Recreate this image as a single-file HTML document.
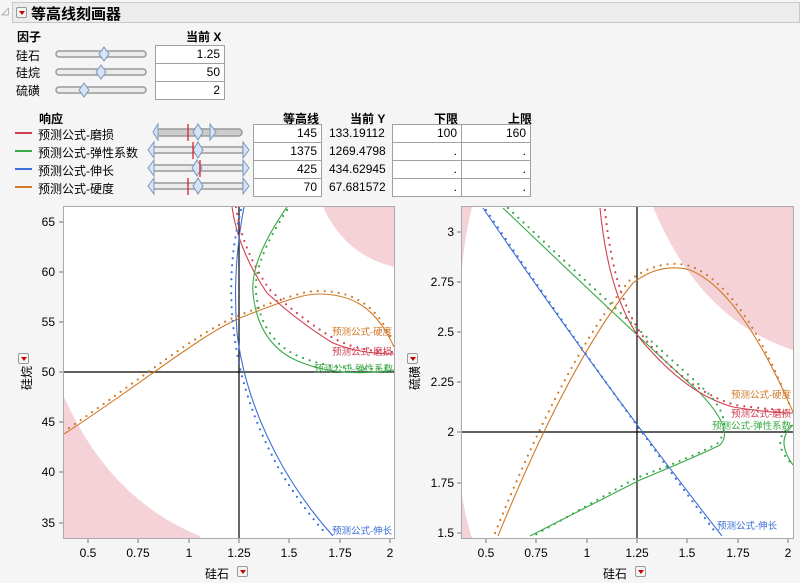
<!DOCTYPE html>
<html><head><meta charset="utf-8"><style>
body{margin:0;width:800px;height:583px;background:#f5f5f5;font-family:"Liberation Sans","Noto Sans CJK SC",sans-serif;font-size:12px;color:#000;position:relative;overflow:hidden}
.a{position:absolute;white-space:nowrap}
.b{font-weight:bold}
.box{position:absolute;background:#fff;border:1px solid #a0a0a0;box-sizing:border-box;text-align:right;padding-right:4px;line-height:17px;height:19px}
.tri{position:absolute;width:11px;height:11px;border:1px solid #999;border-radius:2px;background:#f4f4f4;box-sizing:border-box}
.tri:after{content:"";position:absolute;left:2px;top:3px;border-left:3px solid transparent;border-right:3px solid transparent;border-top:4px solid #c00}
</style></head><body>
<div class="a" style="left:1px;top:6px;font-size:10px;color:#888">◿</div>
<div class="a" style="left:12px;top:2px;width:788px;height:21px;background:#ececec;border:1px solid #c8c8c8;box-sizing:border-box"></div>
<div class="tri" style="left:16px;top:7px"></div>
<div class="a b" style="left:31px;top:3px;font-size:15px">等高线刻画器</div>

<div class="a b" style="left:17px;top:28px">因子</div>
<div class="a b" style="left:186px;top:28px">当前 X</div>
<div class="a" style="left:16px;top:47px">硅石</div>
<div class="a" style="left:16px;top:64px">硅烷</div>
<div class="a" style="left:16px;top:82px">硫磺</div>
<svg class="a" style="left:0;top:0" width="800" height="200">
<g fill="#ececec" stroke="#999" stroke-width="1.5">
<rect x="56" y="51" width="90" height="6" rx="3"/><rect x="56" y="69" width="90" height="6" rx="3"/><rect x="56" y="87" width="90" height="6" rx="3"/>
<rect x="154" y="129" width="88" height="7" rx="3.5" fill="#ccc"/>
<rect x="153" y="147" width="90" height="6" rx="1"/><rect x="153" y="165" width="90" height="6" rx="1"/><rect x="153" y="183" width="90" height="6" rx="1"/>
</g>
<g fill="#d4e3f5" stroke="#7c97b8" stroke-width="1">
<path d="M104 47l5 7-5 7-5-7z"/><path d="M101 65l5 7-5 7-5-7z"/><path d="M84 83l5 7-5 7-5-7z"/>
<path d="M198 124l5 8-5 8-5-8z"/><path d="M198 142l5 8-5 8-5-8z"/><path d="M197 160l5 8-5 8-5-8z"/><path d="M198 178l5 8-5 8-5-8z"/>
<path d="M158 124l-5 8 5 8z"/><path d="M210 124l6 8-6 8z"/>
<path d="M154 142l-6 8 6 8z"/><path d="M243 142l6 8-6 8z"/>
<path d="M154 160l-6 8 6 8z"/><path d="M243 160l6 8-6 8z"/>
<path d="M154 178l-6 8 6 8z"/><path d="M243 178l6 8-6 8z"/>
</g>
<g stroke="#e0202a" stroke-width="1.3"><path d="M188 124v17M193 142v17M200 160v17M188 178v17"/></g>
<g stroke-width="2"><path d="M15 133h17" stroke="#d04050"/><path d="M15 151h17" stroke="#3aa848"/><path d="M15 169h17" stroke="#3d6fd8"/><path d="M15 187h17" stroke="#d07a28"/></g>
</svg>
<div class="box" style="left:155px;top:45px;width:70px">1.25</div>
<div class="box" style="left:155px;top:63px;width:70px">50</div>
<div class="box" style="left:155px;top:81px;width:70px">2</div>

<div class="a b" style="left:39px;top:110px">响应</div>
<div class="a b" style="left:283px;top:110px">等高线</div>
<div class="a b" style="left:350px;top:110px">当前 Y</div>
<div class="a b" style="left:434px;top:110px">下限</div>
<div class="a b" style="left:508px;top:110px">上限</div>
<div class="a" style="left:38px;top:126px">预测公式-磨损</div>
<div class="a" style="left:38px;top:144px">预测公式-弹性系数</div>
<div class="a" style="left:38px;top:162px">预测公式-伸长</div>
<div class="a" style="left:38px;top:180px">预测公式-硬度</div>
<div class="box" style="left:253px;top:124px;width:69px">145</div>
<div class="box" style="left:253px;top:142px;width:69px">1375</div>
<div class="box" style="left:253px;top:160px;width:69px">425</div>
<div class="box" style="left:253px;top:178px;width:69px">70</div>
<div class="a" style="left:329px;top:126px">133.19112</div>
<div class="a" style="left:329px;top:144px">1269.4798</div>
<div class="a" style="left:329px;top:162px">434.62945</div>
<div class="a" style="left:329px;top:180px">67.681572</div>
<div class="box" style="left:392px;top:124px;width:70px">100</div>
<div class="box" style="left:461px;top:124px;width:70px">160</div>
<div class="box" style="left:392px;top:142px;width:70px">.</div>
<div class="box" style="left:461px;top:142px;width:70px">.</div>
<div class="box" style="left:392px;top:160px;width:70px">.</div>
<div class="box" style="left:461px;top:160px;width:70px">.</div>
<div class="box" style="left:392px;top:178px;width:70px">.</div>
<div class="box" style="left:461px;top:178px;width:70px">.</div>

<svg class="a" style="left:0;top:0" width="800" height="583" font-family="Liberation Sans,Noto Sans CJK SC,sans-serif" font-size="12">
<defs><clipPath id="c1"><rect x="64" y="207" width="330" height="331"/></clipPath><clipPath id="c2"><rect x="462" y="207" width="331" height="331"/></clipPath></defs>
<rect x="63.5" y="206.5" width="331" height="332" fill="#fff" stroke="#aaa"/>
<rect x="461.5" y="206.5" width="332" height="332" fill="#fff" stroke="#aaa"/>
<g clip-path="url(#c1)" fill="none">
<path d="M323 207Q345 255 394 267V207z" fill="#f4d2d7"/>
<path d="M64 397Q110 500 200 536V538H64z" fill="#f4d2d7"/>
<path d="M64 372H394M239 207V538" stroke="#000" stroke-width="1.2"/>
<g stroke-width="1.1">
<path d="M64 434C140 385 200 335 240 318C285 300 305 294 318 294C350 294 375 305 394 347" stroke="#d07a28"/>
<path d="M232 207Q238 250 267 293Q300 323 333 343Q360 354 394 354" stroke="#d04050"/>
<path d="M287 207Q250 260 253 293Q258 345 300 362Q340 378 394 370" stroke="#3aa848"/>
<path d="M244 207Q232 270 237 333Q245 400 283 467Q305 505 333 536" stroke="#3d6fd8"/>
</g>
<g stroke-width="2.2" stroke-linecap="round" stroke-dasharray="0 7">
<path d="M69 428C140 380 200 330 240 315C285 297 305 291 318 291C350 291 375 302 392 340" stroke="#d07a28"/>
<path d="M236 207Q242 250 270 290Q300 318 333 338Q360 352 392 352" stroke="#d04050"/>
<path d="M287 210Q253 262 256 293Q262 343 303 358Q340 372 392 368" stroke="#3aa848"/>
<path d="M241 210Q226 270 234 333Q242 400 278 467Q300 505 327 535" stroke="#3d6fd8"/>
</g>
</g>
<g clip-path="url(#c2)" fill="none">
<path d="M653 207Q700 320 793 350V207z" fill="#f4d2d7"/>
<path d="M462 207H472Q464 240 462 270z" fill="#f4d2d7"/>
<path d="M462 495Q466 520 472 538H462z" fill="#f4d2d7"/>
<path d="M462 432H793M637 207V538" stroke="#000" stroke-width="1.2"/>
<g stroke-width="1.1">
<path d="M483 208Q600 380 722 536" stroke="#3d6fd8"/>
<path d="M503 208Q620 320 700 393Q735 430 720 445Q700 455 640 480L530 536" stroke="#3aa848"/>
<path d="M793 425Q775 440 793 465" stroke="#3aa848"/>
<path d="M600 208Q610 310 650 350Q690 395 733 407Q770 413 793 413" stroke="#d04050"/>
<path d="M498 536Q570 360 633 283Q660 262 690 270Q740 290 793 412" stroke="#d07a28"/>
</g>
<g stroke-width="2.2" stroke-linecap="round" stroke-dasharray="0 7">
<path d="M486 210Q598 375 716 533" stroke="#3d6fd8"/>
<path d="M508 208Q625 318 705 390Q735 420 718 443Q698 455 636 478L535 535" stroke="#3aa848"/>
<path d="M791 426Q770 440 790 462" stroke="#3aa848"/>
<path d="M605 210Q615 310 653 348Q692 392 735 405Q770 410 792 410" stroke="#d04050"/>
<path d="M495 533Q566 356 630 280Q660 258 690 266Q742 285 790 406" stroke="#d07a28"/>
</g>
</g>
<g font-size="9.5">
<text x="332" y="335" fill="#d07a28">预测公式-硬度</text>
<text x="332" y="355" fill="#d04050">预测公式-磨损</text>
<text x="314" y="372" fill="#3aa848">预测公式-弹性系数</text>
<text x="332" y="534" fill="#3d6fd8">预测公式-伸长</text>
<text x="731" y="398" fill="#d07a28">预测公式-硬度</text>
<text x="731" y="417" fill="#d04050">预测公式-磨损</text>
<text x="712" y="429" fill="#3aa848">预测公式-弹性系数</text>
<text x="717" y="529" fill="#3d6fd8">预测公式-伸长</text>
</g>
<g stroke="#777"><path d="M59 222h4M59 272h4M59 322h4M59 372h4M59 422h4M59 472h4M59 523h4M88 539v4M138 539v4M189 539v4M239 539v4M289 539v4M340 539v4M390 539v4"/>
<path d="M457 232h4M457 282h4M457 332h4M457 382h4M457 432h4M457 483h4M457 533h4M486 539v4M536 539v4M587 539v4M637 539v4M687 539v4M738 539v4M788 539v4"/></g>
<g text-anchor="end"><text x="55" y="226">65</text><text x="55" y="276">60</text><text x="55" y="326">55</text><text x="55" y="376">50</text><text x="55" y="426">45</text><text x="55" y="476">40</text><text x="55" y="527">35</text>
<text x="454" y="236">3</text><text x="454" y="286">2.75</text><text x="454" y="336">2.5</text><text x="454" y="386">2.25</text><text x="454" y="436">2</text><text x="454" y="487">1.75</text><text x="454" y="537">1.5</text></g>
<g text-anchor="middle"><text x="88" y="557">0.5</text><text x="138" y="557">0.75</text><text x="189" y="557">1</text><text x="239" y="557">1.25</text><text x="289" y="557">1.5</text><text x="340" y="557">1.75</text><text x="390" y="557">2</text>
<text x="486" y="557">0.5</text><text x="536" y="557">0.75</text><text x="587" y="557">1</text><text x="637" y="557">1.25</text><text x="687" y="557">1.5</text><text x="738" y="557">1.75</text><text x="788" y="557">2</text></g>
<text x="205" y="578">硅石</text><text x="603" y="578">硅石</text>
<text transform="translate(31,390) rotate(-90)">硅烷</text>
<text transform="translate(419,390) rotate(-90)">硫磺</text>
</svg>
<div class="tri" style="left:237px;top:566px"></div>
<div class="tri" style="left:635px;top:566px"></div>
<div class="tri" style="left:18px;top:353px"></div>
<div class="tri" style="left:407px;top:353px"></div>
</body></html>
